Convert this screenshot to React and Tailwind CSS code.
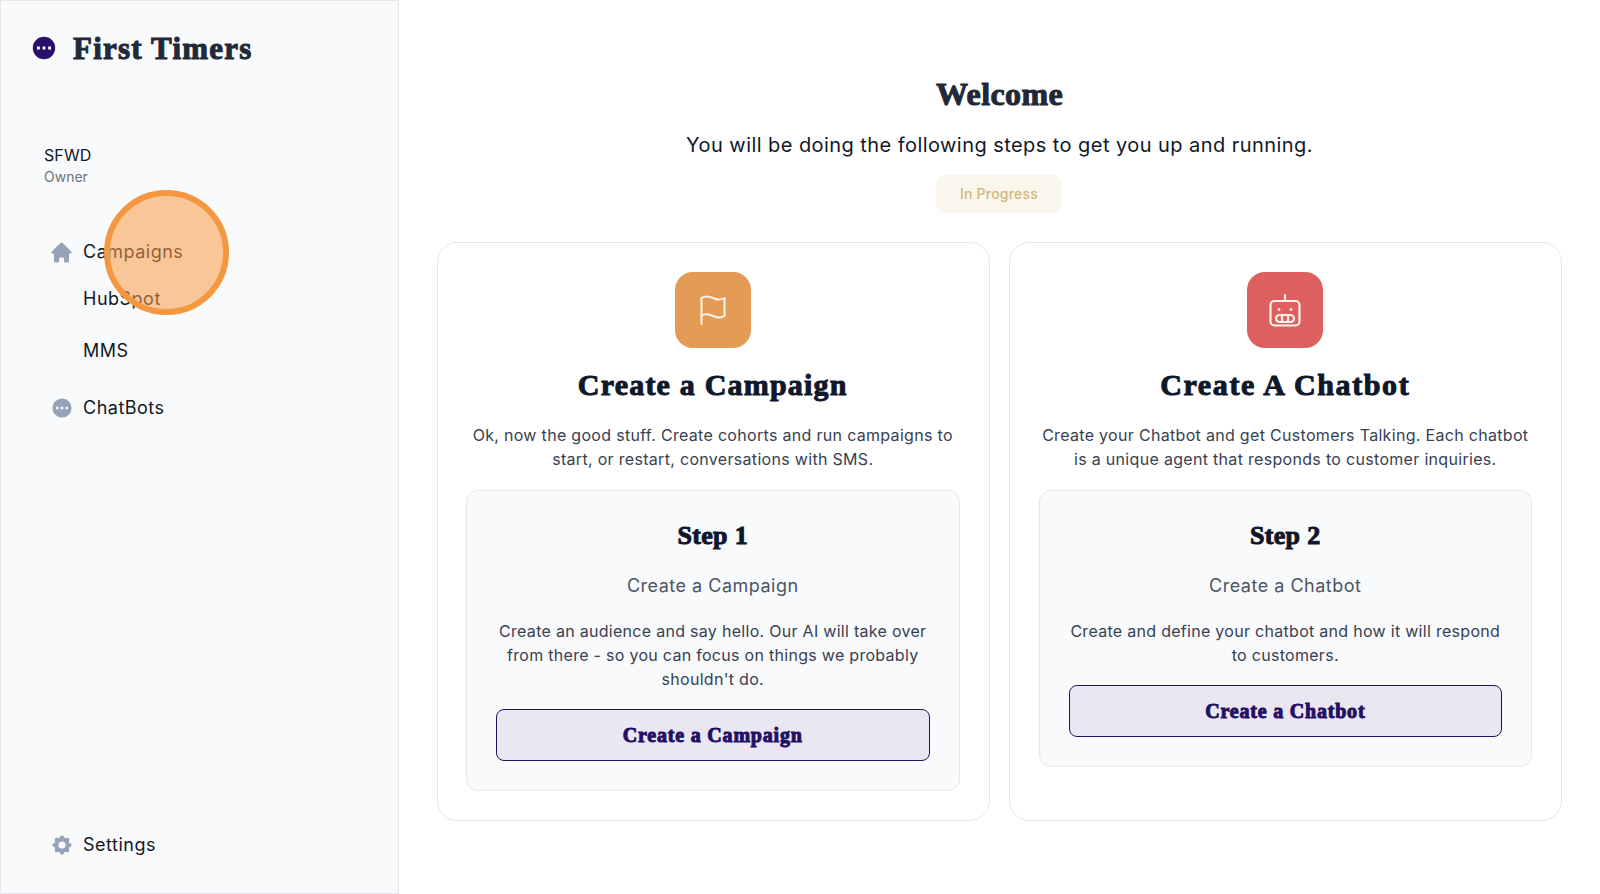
import React from "react";
import { HiHome, HiDotsCircleHorizontal, HiCog } from "react-icons/hi";

const display = "font-['Liberation_Serif',serif] font-bold [-webkit-text-stroke:1px_currentColor]";

function NavItem({ icon, children, className = "" }) {
  return (
    <div className={"flex items-center h-6 " + className}>
      <div className="w-[20px] mr-[12px] flex justify-center text-[#94a3b8]">{icon}</div>
      <span className="text-[18px] leading-6 tracking-[0.5px] text-[#111827]">{children}</span>
    </div>
  );
}

function FlagIcon() {
  return (
    <svg width="26" height="30" viewBox="0 0 26 30" fill="none" stroke="currentColor" strokeWidth="2" strokeLinecap="round" strokeLinejoin="round">
      <path d="M1.5 3C5 .8 9 1 13 3c4 2 8 2 11.5 0v18c-3.500 2-7.500 2-11.500 0-4-2-8-2.500-11.500 0" />
      <path d="M1.500 3v26" />
    </svg>
  );
}

function RobotIcon() {
  return (
    <svg width="36" height="36" viewBox="0 0 36 36" fill="none" stroke="currentColor" strokeWidth="2.200" strokeLinecap="round" strokeLinejoin="round">
      <rect x="3.500" y="9" width="29" height="24.500" rx="4" />
      <path d="M18 3v6" />
      <circle cx="12" cy="17.500" r="1.400" fill="currentColor" stroke="none" />
      <circle cx="24" cy="17.500" r="1.400" fill="currentColor" stroke="none" />
      <rect x="9" y="23" width="18" height="7" rx="3.500" />
      <path d="M15 23v7M21 23v7" />
    </svg>
  );
}

function Card({ padding, titleTracking, icon, color, title, desc, step, sub, body, button }) {
  return (
    <div className={"flex-1 h-[579px] rounded-[20px] border border-[#e5e7eb] bg-white pt-[29px] flex flex-col items-center " + padding}>
      <div className={"w-[76px] h-[76px] rounded-[18px] flex items-center justify-center text-[#fdf3e7] " + color}>{icon}</div>
      <h2 className={"mt-[19px] text-[30px] leading-9 text-[#0f172a] " + titleTracking + " " + display}>{title}</h2>
      <p className="mt-[20px] text-center text-[16px] leading-6 tracking-[0.31px] text-[#374151] w-full">{desc}</p>
      <div className="mt-[19px] w-full rounded-xl border border-[#e5e7eb] bg-[#f9fafb] px-[29px] pt-[29px] pb-[29px] flex flex-col items-center">
        <h3 className={"text-[26px] leading-8 text-[#0f172a] tracking-[0.3px] " + display}>{step}</h3>
        <p className="mt-[22px] text-[18px] leading-6 tracking-[0.5px] text-[#4b5563]">{sub}</p>
        <p className="mt-[21px] text-center text-[16px] leading-6 tracking-[0.29px] text-[#374151]">{body}</p>
        <button className={"mt-[18px] w-full h-[52px] rounded-lg border border-[#241063] bg-[#ebe7f2] text-[20px] text-[#241063] tracking-[0.8px] " + display}>{button}</button>
      </div>
    </div>
  );
}

export default function App() {
  return (
    <div className="relative flex h-[894px] w-[1600px] overflow-hidden bg-white font-['Inter',sans-serif]">
      <aside className="w-[399px] shrink-0 h-full bg-[#f9fafb] border border-[#e5e7eb] flex flex-col pl-[32px] pt-[27px] pb-[36px]">
        <div className="flex items-center h-[40px]">
          <HiDotsCircleHorizontal className="w-[28px] h-[28px] text-[#2a0f6b] -ml-[3px]" />
          <span className={"ml-[15px] mt-[2px] text-[31px] text-[#1f2937] tracking-[1.200px] " + display}>First Timers</span>
        </div>
        <div className="mt-[75px] ml-[11px]">
          <div className="text-[16px] leading-6 tracking-[0.1px] text-[#111827]">SFWD</div>
          <div className="text-[14px] leading-5 text-[#6b7280]">Owner</div>
        </div>
        <nav className="mt-[53px] ml-[18px] flex flex-col">
          <NavItem icon={<HiHome className="w-[25px] h-[25px] shrink-0 ml-[1px]" />}>Campaigns</NavItem>
          <NavItem className="mt-[23px]">HubSpot</NavItem>
          <NavItem className="mt-[28px]">MMS</NavItem>
          <NavItem className="mt-[33px]" icon={<HiDotsCircleHorizontal className="w-[24px] h-[24px] shrink-0 ml-[1px]" />}>ChatBots</NavItem>
        </nav>
        <div className="mt-auto ml-[18px]">
          <NavItem icon={<HiCog className="w-[24px] h-[24px] shrink-0 ml-[1px]" />}>Settings</NavItem>
        </div>
      </aside>
      <main className="flex-1 flex flex-col items-center pt-[76px] pl-[38px] pr-[38px]">
        <h1 className={"text-[32px] leading-9 text-[#1f2937] tracking-[0.4px] " + display}>Welcome</h1>
        <p className="mt-[19px] text-[20px] leading-7 tracking-[0.44px] text-[#111827]">You will be doing the following steps to get you up and running.</p>
        <div className="mt-[16px] w-[126px] h-[38px] pb-[1px] -ml-[1px] rounded-[10px] bg-[#faf6ec] flex items-center justify-center text-[14px] font-medium tracking-[0.2px] text-[#d1b67c]">In Progress</div>
        <div className="mt-[29px] w-full flex gap-[19px]">
          <Card
            padding="pl-[28px] pr-[29px]"
            titleTracking="tracking-[1.2px]"
            color="bg-[#e39b55]"
            icon={<FlagIcon />}
            title="Create a Campaign"
            desc="Ok, now the good stuff. Create cohorts and run campaigns to start, or restart, conversations with SMS."
            step="Step 1"
            sub="Create a Campaign"
            body="Create an audience and say hello. Our AI will take over from there - so you can focus on things we probably shouldn't do."
            button="Create a Campaign"
          />
          <Card
            padding="px-[29px]"
            titleTracking="tracking-[1.6px]"
            color="bg-[#de5f5f]"
            icon={<RobotIcon />}
            title="Create A Chatbot"
            desc="Create your Chatbot and get Customers Talking. Each chatbot is a unique agent that responds to customer inquiries."
            step="Step 2"
            sub="Create a Chatbot"
            body="Create and define your chatbot and how it will respond to customers."
            button="Create a Chatbot"
          />
        </div>
      </main>
      <div className="absolute left-[104px] top-[190px] w-[125px] h-[125px] rounded-full border-[6px] border-[#f59740] bg-[#f89a46]/55" />
    </div>
  );
}
